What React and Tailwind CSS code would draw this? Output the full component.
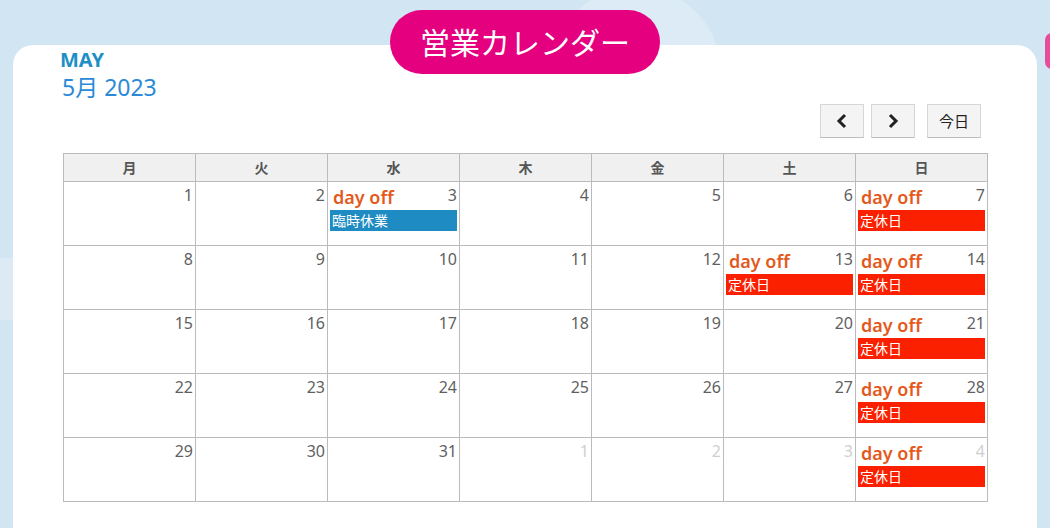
import React from "react";

const days = ["月", "火", "水", "木", "金", "土", "日"];

const events = {
  "5-3": { label: "臨時休業", color: "bg-[#1e8bc3]" },
  "5-7": { label: "定休日", color: "bg-[#fa2000]" },
  "5-13": { label: "定休日", color: "bg-[#fa2000]" },
  "5-14": { label: "定休日", color: "bg-[#fa2000]" },
  "5-21": { label: "定休日", color: "bg-[#fa2000]" },
  "5-28": { label: "定休日", color: "bg-[#fa2000]" },
  "6-4": { label: "定休日", color: "bg-[#fa2000]" },
};

function buildWeeks() {
  const cells = [];
  for (let d = 1; d <= 31; d++) cells.push({ m: 5, d });
  for (let d = 1; d <= 4; d++) cells.push({ m: 6, d });
  const weeks = [];
  for (let i = 0; i < cells.length; i += 7) weeks.push(cells.slice(i, i + 7));
  return weeks;
}

function DayCell({ c }) {
  const ev = events[`${c.m}-${c.d}`];
  const other = c.m !== 5;
  return (
    <td className="h-[64px] border border-[#bbb] align-top p-0">
      <div className="flex items-start justify-between h-[26px]">
        {ev ? (
          <span className="pl-[5px] pt-[4px] text-[18px] leading-[22px] font-semibold text-[#e35a20]">day off</span>
        ) : <span />}
        <span className={`pr-[2px] pt-[3px] text-[16px] leading-[20px] ${other ? "text-[#cfcfcf]" : "text-[#5f5f5f]"}`}>
          {c.d}
        </span>
      </div>
      {ev && (
        <div className={`mx-[2px] mt-[2px] h-[21px] ${ev.color} text-white text-[14px] leading-[21px] pl-[2px]`}>
          {ev.label}
        </div>
      )}
    </td>
  );
}

export default function App() {
  const weeks = buildWeeks();
  return (
    <div
      className="relative w-[1050px] h-[528px] overflow-hidden bg-[#d1e5f2]"
      style={{ fontFamily: '"Noto Sans", "Noto Sans CJK JP", sans-serif' }}
    >
      {/* background decorations */}
      <div className="absolute left-[551px] top-[-13px] w-[170px] h-[170px] rounded-full bg-[#dcebf5]" />
      <div className="absolute left-[-40px] top-[258px] w-[60px] h-[62px] bg-[#dbeaf5]" />
      <div className="absolute left-[1045px] top-[33px] w-[14px] h-[36px] rounded-full bg-[#e84a9c]" />

      <div className="relative pt-[45px] px-[13px]">
        <div className="bg-white rounded-t-[20px] h-[500px] px-[50px] pt-[3px]">
          <div className="-ml-[3px]">
            <div className="text-[20px] leading-[24px] font-bold text-[#1e8fc6]">MAY</div>
            <div className="mt-[1px] text-[23px] leading-[28px] text-[#2a8ad8] pl-[2px]">5月 2023</div>
          </div>
          <div className="flex justify-end gap-[7px] mt-[3px] mr-[6px]">
            <button className="w-[44px] h-[34px] bg-[#f4f4f4] border border-[#d6d6d6] border-b-[#bdbdbd] flex items-center justify-center">
              <svg width="14" height="16" viewBox="0 0 14 16"><path d="M10 2 L4 8 L10 14" stroke="#222" strokeWidth="3" fill="none" /></svg>
            </button>
            <button className="w-[44px] h-[34px] bg-[#f4f4f4] border border-[#d6d6d6] border-b-[#bdbdbd] flex items-center justify-center">
              <svg width="14" height="16" viewBox="0 0 14 16"><path d="M4 2 L10 8 L4 14" stroke="#222" strokeWidth="3" fill="none" /></svg>
            </button>
            <button className="ml-[5px] w-[54px] h-[34px] bg-[#f4f4f4] border border-[#d6d6d6] border-b-[#bdbdbd] text-[15px] text-[#222]">
              今日
            </button>
          </div>
          <table className="mt-[15px] w-[925px] table-fixed border-collapse border border-[#bbb]">
            <thead>
              <tr>
                {days.map((d) => (
                  <th key={d} className="h-[28px] border border-[#bbb] bg-[#f0f0f0] text-[14px] font-bold text-[#555]">
                    {d}
                  </th>
                ))}
              </tr>
            </thead>
            <tbody>
              {weeks.map((w, i) => (
                <tr key={i}>
                  {w.map((c) => (
                    <DayCell key={`${c.m}-${c.d}`} c={c} />
                  ))}
                </tr>
              ))}
            </tbody>
          </table>
        </div>
      </div>

      <div className="absolute left-[390px] top-[10px] w-[270px] h-[64px] rounded-full bg-[#e4007f] flex items-center justify-center text-white text-[30px]">
        営業カレンダー
      </div>
    </div>
  );
}
